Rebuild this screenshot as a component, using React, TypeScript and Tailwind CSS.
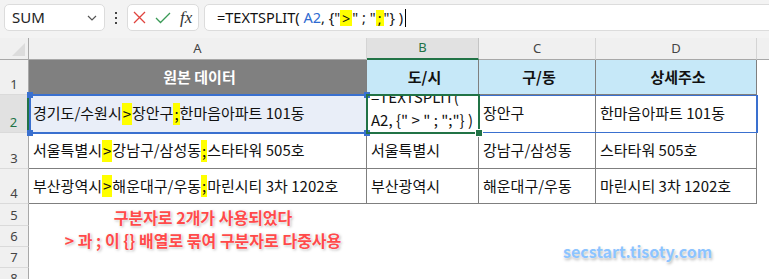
import React from 'react';

const KR = "font-['Noto_Sans_CJK_KR','Noto_Sans',sans-serif]";
const UI = "font-['Noto_Sans','Noto_Sans_CJK_KR',sans-serif]";

// yellow marker used for the two delimiters
function Hl({ ch }: { ch: string }) {
  return <span className="inline-block bg-[#ffff00] h-[22px] leading-[22px] px-[1px]">{ch}</span>;
}

function RowHead({ n, active }: { n: number; active?: boolean }) {
  return (
    <div
      className={`flex items-end justify-center pb-[1px] border-b border-[#dadada] text-[13px] leading-[17px] ${UI} ${
        active
          ? 'bg-[#e1e1e1] text-[#217346] border-r-2 border-r-[#217346]'
          : 'bg-[#f0f0f0] text-[#444] border-r border-r-[#a8a8a8]'
      }`}
    >
      {n}
    </div>
  );
}

function Cell({ children, className = '' }: { children?: React.ReactNode; className?: string }) {
  return (
    <div className={`flex items-center pl-[4px] border-r border-b border-[#7f7f7f] text-[15px] text-[#111] whitespace-nowrap overflow-hidden ${KR} ${className}`}>
      {children}
    </div>
  );
}

const rows = [
  { a: ['경기도/수원시', '장안구', '한마음아파트 101동'], b: '', c: '장안구', d: '한마음아파트 101동' },
  { a: ['서울특별시', '강남구/삼성동', '스타타워 505호'], b: '서울특별시', c: '강남구/삼성동', d: '스타타워 505호' },
  { a: ['부산광역시', '해운대구/우동', '마린시티 3차 1202호'], b: '부산광역시', c: '해운대구/우동', d: '마린시티 3차 1202호' },
];

export default function App() {
  return (
    <div className={`relative w-[769px] h-[279px] overflow-hidden bg-white ${UI}`}>
      {/* formula bar */}
      <div className="h-[38px] bg-[#f3f3f3] flex items-start pt-[4px] pl-[4px] overflow-hidden">
        <div className="shrink-0 w-[101px] h-[27px] bg-white border border-[#dcdcdc] rounded-[5px] flex items-center justify-between pl-[7px] pr-[7px] text-[15px] text-[#222]">
          <span>SUM</span>
          <svg width="10" height="6" viewBox="0 0 10 6" fill="none" stroke="#555" strokeWidth="1.2">
            <path d="M1 1l4 4 4-4" />
          </svg>
        </div>
        <div className="shrink-0 w-[22px] h-[27px] flex flex-col items-center justify-center gap-[3px]">
          <span className="w-[2px] h-[2px] bg-[#444]" />
          <span className="w-[2px] h-[2px] bg-[#444]" />
          <span className="w-[2px] h-[2px] bg-[#444]" />
        </div>
        <div className="shrink-0 w-[72px] h-[27px] bg-white border border-[#dcdcdc] rounded-[5px] flex items-center pl-[5px] gap-[9px]">
          <svg width="13" height="13" viewBox="0 0 13 13" stroke="#e0443e" strokeWidth="1.3">
            <path d="M1 1l11 11M12 1L1 12" />
          </svg>
          <svg width="16" height="12" viewBox="0 0 16 12" fill="none" stroke="#3a9a56" strokeWidth="1.3">
            <path d="M1 6l4.5 4.5L15 1" />
          </svg>
          <span className="font-['Liberation_Serif',serif] italic text-[17px] leading-none text-[#333]">fx</span>
        </div>
        <div className="shrink-0 ml-[5px] w-[600px] h-[27px] bg-white border border-[#dcdcdc] rounded-[5px] flex items-center pl-[12px] text-[14.5px] text-[#111] whitespace-pre">
          <span>=TEXTSPLIT( </span>
          <span className="text-[#2e6bd1]">A2</span>
          <span>, {'{'}"</span>
          <span className="bg-[#ffff00] px-[2px] leading-[16px]">&gt;</span>
          <span>" ; "</span>
          <span className="bg-[#ffff00] px-[2px] leading-[16px]">;</span>
          <span>"{'}'} )</span>
          <span className="ml-[2px] w-[1px] h-[18px] bg-black" />
        </div>
      </div>

      {/* sheet grid */}
      <div className="grid grid-cols-[29px_338px_112px_117px_161px_1fr] grid-rows-[22px_35px_38px_36px_35px_22px_21px_21px_21px]">
        {/* column headings */}
        <div className="relative bg-[#f0f0f0] border-r border-b border-[#a8a8a8]">
          <svg className="absolute right-[3px] bottom-[3px]" width="13" height="13" viewBox="0 0 13 13">
            <path d="M13 0V13H0Z" fill="#dcdcdc" />
          </svg>
        </div>
        <div className="flex items-center justify-center bg-[#f0f0f0] border-r border-b border-[#d4d4d4] border-b-[#a8a8a8] text-[13px] text-[#444]">A</div>
        <div className="flex items-center justify-center bg-[#e1e1e1] border-r border-[#c4c4c4] border-b-2 border-b-[#217346] text-[13px] text-[#217346]">B</div>
        <div className="flex items-center justify-center bg-[#f0f0f0] border-r border-b border-[#d4d4d4] border-b-[#a8a8a8] text-[13px] text-[#444]">C</div>
        <div className="flex items-center justify-center bg-[#f0f0f0] border-r border-b border-[#d4d4d4] border-b-[#a8a8a8] text-[13px] text-[#444]">D</div>
        <div className="bg-[#f0f0f0] border-b border-[#a8a8a8]" />

        {/* row 1: table header */}
        <RowHead n={1} />
        <Cell className="justify-center pl-0 bg-[#808080] text-white font-bold">원본 데이터</Cell>
        <Cell className="justify-center pl-0 bg-[#c6e8f8] font-bold">도/시</Cell>
        <Cell className="justify-center pl-0 bg-[#c6e8f8] font-bold">구/동</Cell>
        <Cell className="justify-center pl-0 bg-[#c6e8f8] font-bold">상세주소</Cell>
        <div />

        {rows.map((r, i) => (
          <React.Fragment key={i}>
            <RowHead n={i + 2} active={i === 0} />
            <Cell className={i === 0 ? 'bg-[#e9eef8]' : ''}>
              {r.a[0]}
              <Hl ch=">" />
              {r.a[1]}
              <Hl ch=";" />
              {r.a[2]}
            </Cell>
            {i === 0 ? (
              <Cell className="flex-col items-start justify-end leading-[23px] pb-[1px]">
                <span className="shrink-0">=TEXTSPLIT(</span>
                <span className="shrink-0 whitespace-pre">A2, {'{'}" &gt; " ; ";"{'}'} )</span>
              </Cell>
            ) : (
              <Cell>{r.b}</Cell>
            )}
            <Cell>{r.c}</Cell>
            <Cell>{r.d}</Cell>
            <div />
          </React.Fragment>
        ))}

        {[5, 6, 7, 8].map((n) => (
          <React.Fragment key={n}>
            <RowHead n={n} />
            <div />
            <div />
            <div />
            <div />
            <div />
          </React.Fragment>
        ))}
      </div>

      {/* reference outline of A2 */}
      <div className="absolute left-[29px] top-[94px] w-[339px] h-[40px] border-2 border-[#3a70cf]" />
      <span className="absolute left-[27px] top-[92px] w-[6px] h-[6px] bg-[#3a70cf]" />
      <span className="absolute left-[364px] top-[92px] w-[6px] h-[6px] bg-[#3a70cf]" />
      <span className="absolute left-[27px] top-[130px] w-[6px] h-[6px] bg-[#3a70cf]" />
      <span className="absolute left-[364px] top-[130px] w-[6px] h-[6px] bg-[#3a70cf]" />

      {/* spill range B2:D2 */}
      <div className="absolute left-[367px] top-[95px] w-[391px] h-[38px] border border-r-2 border-[#3a70cf]" />

      {/* active cell B2 */}
      <div className="absolute left-[366px] top-[94px] w-[114px] h-[40px] border-2 border-[#217346]" />
      <span className="absolute left-[476px] top-[130px] w-[6px] h-[6px] bg-[#217346] outline outline-1 outline-white" />

      {/* annotation */}
      <div
        className={`absolute left-[30px] top-[206px] w-[346px] text-center text-[16px] leading-[23px] font-bold text-[#ff4a4a] ${KR} [text-shadow:0_0_2px_#fff,0_0_2px_#fff,1px_1px_3px_rgba(0,0,0,0.35)]`}
      >
        <div>구분자로 2개가 사용되었다</div>
        <div className="whitespace-pre">&gt; 과 ; 이 {'{}'} 배열로 묶여 구분자로 다중사용</div>
      </div>

      <div
        className={`absolute left-[563px] top-[239px] text-[16px] font-bold text-[#8cc4ff] ${KR} [text-shadow:0_0_2px_#fff,1px_2px_3px_rgba(0,0,0,0.3)]`}
      >
        secstart.tisoty.com
      </div>
    </div>
  );
}
